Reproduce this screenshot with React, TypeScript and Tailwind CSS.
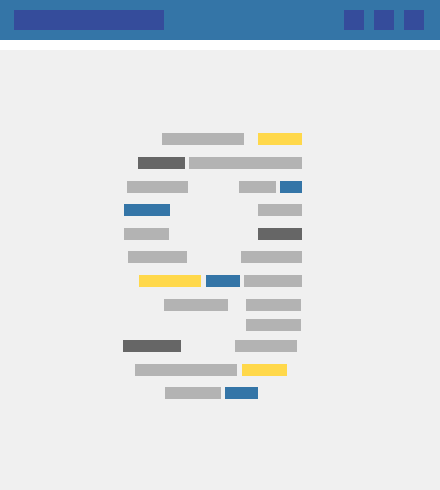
const gray = 'bg-[#b3b3b3]';
const dark = 'bg-[#666666]';
const yellow = 'bg-[#ffd84a]';
const blue = 'bg-[#3475a7]';

// each row: top margin + bars (margin-left from previous bar end)
const rows: { mt: string; bars: string[] }[] = [
  { mt: 'mt-[83px]', bars: [`ml-[162px] w-[82px] ${gray}`, `ml-[14px] w-[44px] ${yellow}`] },
  { mt: 'mt-[12px]', bars: [`ml-[138px] w-[47px] ${dark}`, `ml-[4px] w-[113px] ${gray}`] },
  { mt: 'mt-[12px]', bars: [`ml-[127px] w-[61px] ${gray}`, `ml-[51px] w-[37px] ${gray}`, `ml-[4px] w-[22px] ${blue}`] },
  { mt: 'mt-[11px]', bars: [`ml-[124px] w-[46px] ${blue}`, `ml-[88px] w-[44px] ${gray}`] },
  { mt: 'mt-[12px]', bars: [`ml-[124px] w-[45px] ${gray}`, `ml-[89px] w-[44px] ${dark}`] },
  { mt: 'mt-[11px]', bars: [`ml-[128px] w-[59px] ${gray}`, `ml-[54px] w-[61px] ${gray}`] },
  { mt: 'mt-[12px]', bars: [`ml-[139px] w-[62px] ${yellow}`, `ml-[5px] w-[34px] ${blue}`, `ml-[4px] w-[58px] ${gray}`] },
  { mt: 'mt-[12px]', bars: [`ml-[164px] w-[64px] ${gray}`, `ml-[18px] w-[55px] ${gray}`] },
  { mt: 'mt-[8px]', bars: [`ml-[246px] w-[55px] ${gray}`] },
  { mt: 'mt-[9px]', bars: [`ml-[123px] w-[58px] ${dark}`, `ml-[54px] w-[62px] ${gray}`] },
  { mt: 'mt-[12px]', bars: [`ml-[135px] w-[102px] ${gray}`, `ml-[5px] w-[45px] ${yellow}`] },
  { mt: 'mt-[11px]', bars: [`ml-[165px] w-[56px] ${gray}`, `ml-[4px] w-[33px] ${blue}`] },
];

export default function App() {
  return (
    <div className="w-[440px] h-[490px] flex flex-col bg-[#f0f0f0] overflow-hidden">
      <header className="h-10 bg-[#3475a7] flex items-center pl-[14px] pr-4">
        <div className="w-[150px] h-5 bg-[#354c9b]" />
        <div className="ml-auto flex gap-[10px]">
          <div className="w-5 h-5 bg-[#354c9b]" />
          <div className="w-5 h-5 bg-[#354c9b]" />
          <div className="w-5 h-5 bg-[#354c9b]" />
        </div>
      </header>
      <div className="h-[10px] bg-white" />
      <main className="flex-1 flex flex-col">
        {rows.map((row, i) => (
          <div key={i} className={`flex h-3 ${row.mt}`}>
            {row.bars.map((b, j) => (
              <div key={j} className={`h-3 shrink-0 ${b}`} />
            ))}
          </div>
        ))}
      </main>
    </div>
  );
}
